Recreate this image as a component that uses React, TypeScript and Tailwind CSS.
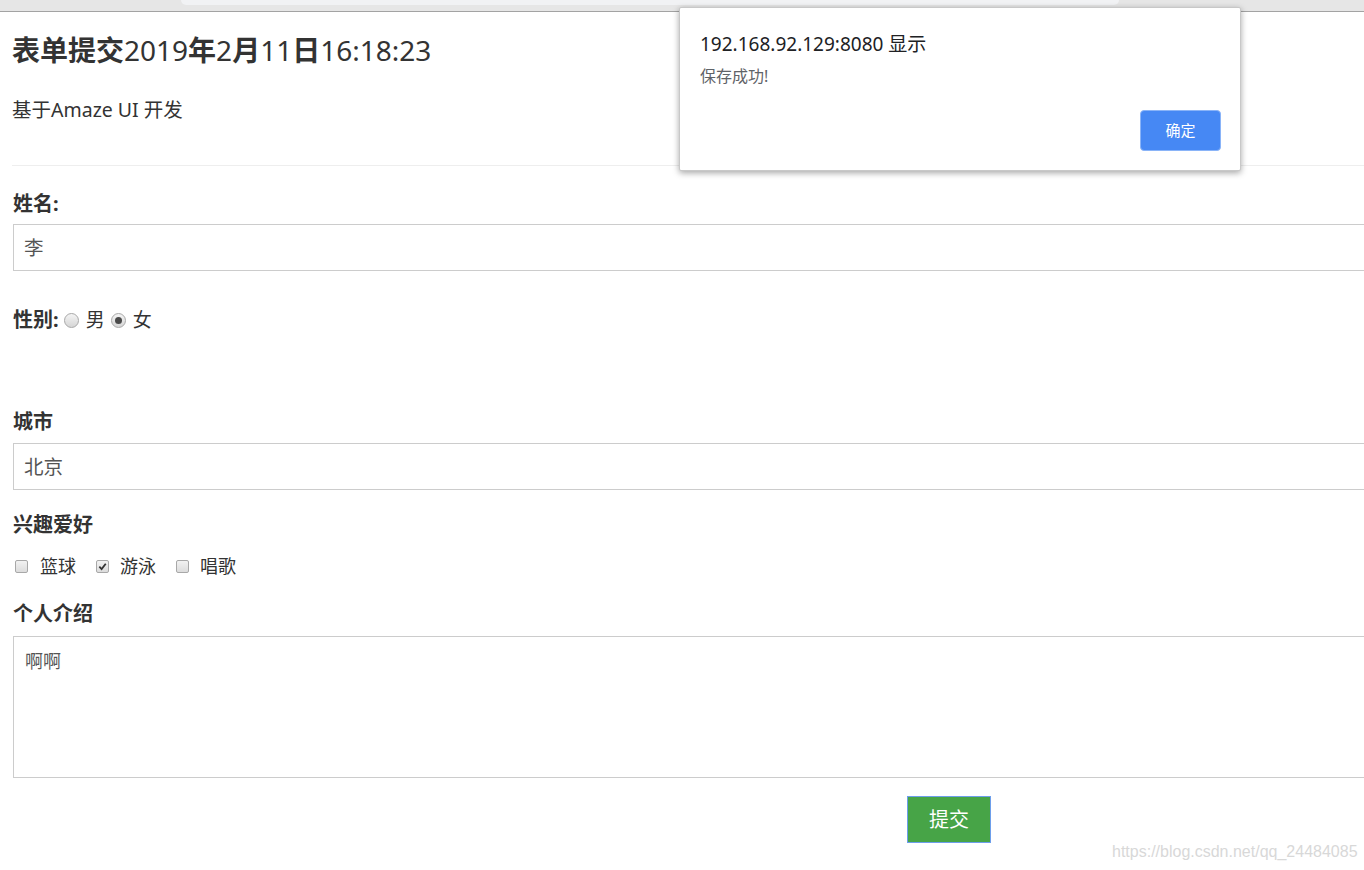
import React from "react";

const font = { fontFamily: '"Noto Sans", "Noto Sans CJK SC", sans-serif' };

function Radio({ checked }: { checked?: boolean }) {
  return (
    <span className="inline-flex w-[15px] h-[15px] rounded-full border border-[#a8a8a8] bg-gradient-to-b from-[#f4f4f4] to-[#d6d6d6] items-center justify-center">
      {checked && <span className="w-[7px] h-[7px] rounded-full bg-[#4a4a4a]" />}
    </span>
  );
}

function Check({ checked }: { checked?: boolean }) {
  return (
    <span className="inline-flex w-[13px] h-[13px] rounded-[2px] border border-[#a8a8a8] bg-gradient-to-b from-[#f2f2f2] to-[#dcdcdc] items-center justify-center">
      {checked && (
        <svg width="9" height="9" viewBox="0 0 10 10">
          <path d="M1.5 5.2 L4 7.8 L8.6 2" stroke="#333" strokeWidth="2" fill="none" />
        </svg>
      )}
    </span>
  );
}

export default function App() {
  return (
    <div className="relative w-[1364px] h-[870px] overflow-hidden bg-white text-[#333]" style={font}>
      {/* browser chrome strip */}
      <div className="h-[12px] bg-[#e6e6e6] border-b border-[#a3a3a3]">
        <div className="ml-[181px] w-[938px] h-[5px] bg-[#f1f2f4] rounded-b-[8px]" />
      </div>

      <div className="pl-[12px]">
        <h1 className="mt-[18px] text-[28px] leading-[40px] font-bold whitespace-nowrap">
          表单提交<span className="font-normal">2019</span>年<span className="font-normal">2</span>月<span className="font-normal">11</span>日<span className="font-normal">16:18:23</span>
        </h1>
        <p className="mt-[26px] text-[19.5px] leading-[28px]">基于Amaze UI 开发</p>
        <div className="mt-[41px] border-t border-[#eeeeee] w-[1400px]" />

        <div className="mt-[26px] text-[20px] leading-[24px] font-bold ml-[1px]">姓名:</div>
        <div className="mt-[8px] ml-[1px] w-[1400px] h-[47px] border border-[#cccccc] flex items-center pl-[10px] text-[19.5px] text-[#555]">
          李
        </div>

        <div className="mt-[37px] h-[24px] flex items-center text-[19px]">
          <span className="font-bold ml-[1px] text-[20px]">性别:</span>
          <span className="ml-[5px] flex"><Radio /></span>
          <span className="ml-[7px]">男</span>
          <span className="ml-[6px] flex"><Radio checked /></span>
          <span className="ml-[7px]">女</span>
        </div>

        <div className="mt-[78px] text-[20px] leading-[24px] font-bold ml-[1px]">城市</div>
        <div className="mt-[9px] ml-[1px] w-[1400px] h-[47px] border border-[#cccccc] flex items-center pl-[10px] text-[19.5px] text-[#555]">
          北京
        </div>

        <div className="mt-[23px] text-[20px] leading-[24px] font-bold ml-[1px]">兴趣爱好</div>
        <div className="mt-[17px] h-[24px] flex items-center text-[18px] pl-[3px]">
          <Check />
          <span className="ml-[12px]">篮球</span>
          <span className="ml-[20px] flex"><Check checked /></span>
          <span className="ml-[11px]">游泳</span>
          <span className="ml-[20px] flex"><Check /></span>
          <span className="ml-[11px]">唱歌</span>
        </div>

        <div className="mt-[24px] text-[20px] leading-[24px] font-bold ml-[1px]">个人介绍</div>
        <div className="mt-[10px] ml-[1px] w-[1400px] h-[142px] border border-[#cccccc] pl-[11px] pt-[10px] text-[18px] leading-[28px] text-[#555]">
          啊啊
        </div>

        <button className="mt-[18px] ml-[895px] w-[84px] h-[47px] bg-[#47a447] border border-[#6d9eeb] text-white text-[20px] flex items-center justify-center">
          提交
        </button>
      </div>

      {/* watermark */}
      <div
        className="absolute left-[1112px] top-[840px] text-[16px] text-[#d8d8d8] whitespace-nowrap"
        style={{ fontFamily: '"Liberation Sans", Arial, sans-serif' }}
      >
        https://blog.csdn.net/qq_24484085
      </div>

      {/* alert dialog */}
      <div className="absolute left-[679px] top-[7px] w-[562px] h-[164px] bg-white border border-[#c8c8c8] rounded-[2px] shadow-[0_2px_6px_rgba(0,0,0,0.35)]">
        <div className="mt-[24px] ml-[20px] text-[19px] leading-[24px] text-[#202124] whitespace-nowrap">
          192.168.92.129:8080 显示
        </div>
        <div className="mt-[10px] ml-[20px] text-[16px] leading-[20px] text-[#5f6368]">保存成功!</div>
        <div className="flex justify-end mr-[19px] mt-[24px]">
          <button className="w-[81px] h-[41px] rounded-[4px] bg-[#4688f4] border border-[#8ab4f8] text-white text-[15px] flex items-center justify-center">
            确定
          </button>
        </div>
      </div>
    </div>
  );
}
